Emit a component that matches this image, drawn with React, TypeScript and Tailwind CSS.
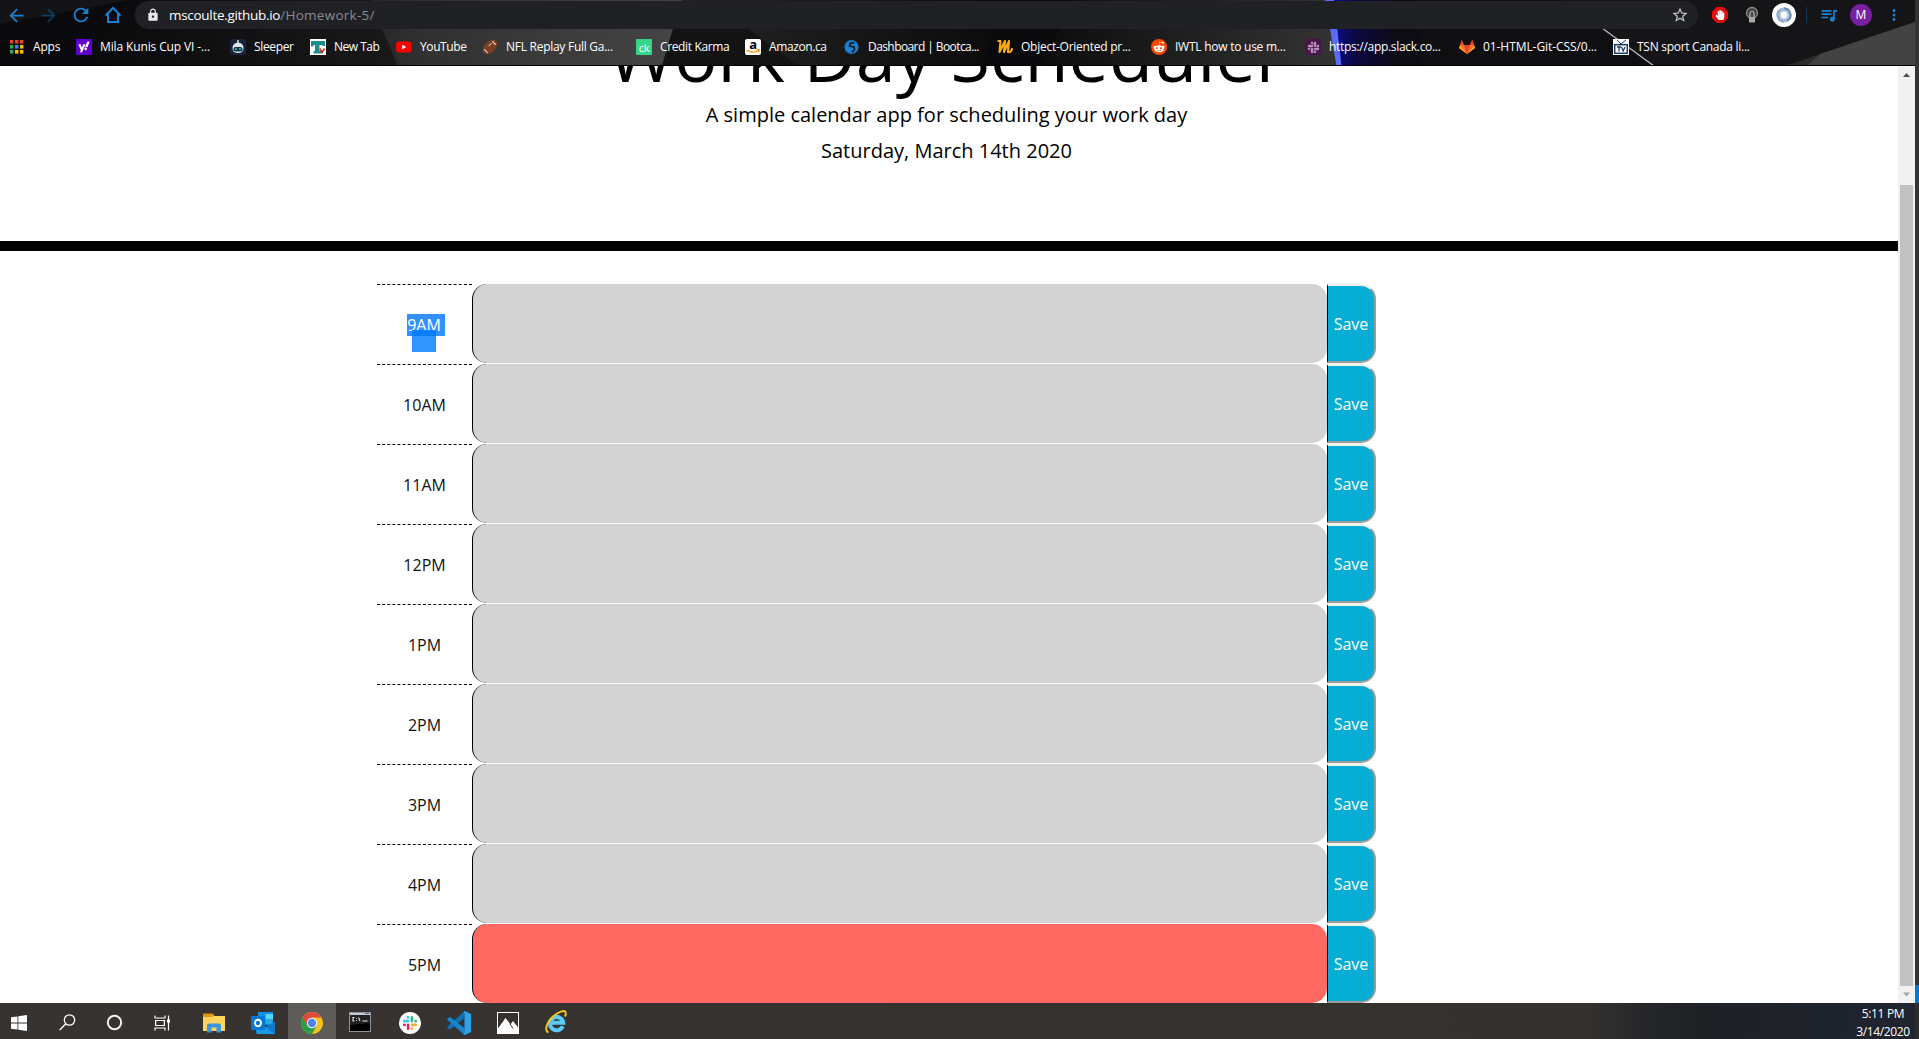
import type { ReactNode } from "react";
import { MdArrowBack, MdArrowForward, MdRefresh, MdLock, MdStarBorder, MdQueueMusic, MdMoreVert } from "react-icons/md";
import { FaYahoo, FaRedditAlien, FaSlack, FaHandPaper } from "react-icons/fa";

const hours = ["9AM", "10AM", "11AM", "12PM", "1PM", "2PM", "3PM", "4PM", "5PM"];
const currentHour = "5PM";

const AppsIcon = () => (
  <svg width="16" height="16" viewBox="0 0 16 16">
    {["#ea4335", "#ea4335", "#ea4335", "#34a853", "#4285f4", "#fbbc05", "#34a853", "#fbbc05", "#fbbc05"].map((c, i) => (
      <rect key={i} x={2 + (i % 3) * 5} y={1 + Math.floor(i / 3) * 5} width="3.4" height="3.6" fill={c} />
    ))}
  </svg>
);
const YahooIcon = () => (
  <span className="flex size-4 items-center justify-center bg-[#5f01d1] text-white"><FaYahoo size={12} /></span>
);
const SleeperIcon = () => (
  <svg width="16" height="16" viewBox="0 0 16 16">
    <rect width="16" height="16" rx="2" fill="#18233b" />
    <path d="M2.500 9a5.500 5.500 0 0 1 11 0q0 5-5.500 5T2.500 9" fill="#dce8ec" />
    <rect x="3.500" y="8" width="9" height="4.500" rx="2" fill="#173140" />
    <circle cx="6" cy="10" r="1" fill="#38c9bd" />
    <circle cx="10" cy="10" r="1" fill="#38c9bd" />
    <path d="M8 1v3" stroke="#dce8ec" strokeWidth="1.500" />
  </svg>
);
const NewTabIcon = () => (
  <svg width="16" height="16" viewBox="0 0 16 16">
    <rect width="16" height="16" fill="#fff" />
    <path d="M1 2h14v5h-2.500V6H9.500v6H11v2.500H3.500V12H5V6H3.500v1.500H1z" fill="#1b8d8a" />
    <path d="M10 9.500l2 4L14.500 9.500" stroke="#d22" strokeWidth="1.600" fill="none" />
  </svg>
);
const YoutubeIcon = () => (
  <svg width="16" height="16" viewBox="0 0 16 16">
    <rect x="0" y="2.500" width="15.500" height="11" rx="3" fill="#f00" />
    <path d="M6.200 5.700v4.600L10.200 8z" fill="#fff" />
  </svg>
);
const FootballIcon = () => (
  <svg width="16" height="16" viewBox="0 0 16 16">
    <ellipse cx="8" cy="8" rx="8.500" ry="5.500" fill="#7c3f22" transform="rotate(-45 8 8)" />
    <path d="M2 10.500q2.200.8 3.500 3.500M10.500 2q1.200 2.700 3.500 3.500" stroke="#e8ddd6" strokeWidth="1.100" fill="none" />
    <path d="M6.500 7l3-2.500" stroke="#e8ddd6" strokeWidth="1" />
  </svg>
);
const KarmaIcon = () => (
  <span className="flex size-4 items-center justify-center rounded-[1px] bg-[#35d58b] text-[11px] leading-none tracking-tight text-white">ck</span>
);
const AmazonIcon = () => (
  <span className="relative flex size-4 items-center justify-center rounded-[2px] bg-white">
    <b className="-mt-[5px] text-[13px] leading-none text-black">a</b>
    <svg width="16" height="16" viewBox="0 0 16 16" className="absolute inset-0">
      <path d="M1.500 11q6.500 4 12 .5M11.500 10.500l2.800.3-.8 2.500" stroke="#f90" strokeWidth="1.400" fill="none" />
    </svg>
  </span>
);
const GlobeIcon = () => (
  <svg width="16" height="16" viewBox="0 0 16 16">
    <circle cx="7.500" cy="8" r="7" fill="#1a7fd0" />
    <path d="M10.500 3.500L6 4.500 5.500 7l4.500 1 .5 2.500L8 13.500" stroke="#12181d" strokeWidth="1.700" fill="none" />
  </svg>
);
const ScribbleIcon = () => (
  <svg width="16" height="16" viewBox="0 0 16 16">
    <path d="M.5 2h3L2.500 13 8 2 7 13l5-11-1 11q3 1 4.500-4" stroke="#fba919" strokeWidth="2.200" fill="none" strokeLinejoin="round" />
  </svg>
);
const RedditIcon = () => (
  <span className="flex size-4 items-center justify-center rounded-full bg-[#ff4500] text-white"><FaRedditAlien size={12} /></span>
);
const SlackFav = () => (
  <span className="flex size-4 items-center justify-center bg-[#4a154b] text-[#b58fb8]"><FaSlack size={13} /></span>
);
const FoxIcon = () => (
  <svg width="16" height="16" viewBox="0 0 16 16">
    <path d="M8 15L0 9l2.800-8L5 6h6l2.200-5L16 9z" fill="#fc6d26" />
    <path d="M8 15L5 6h6zM1 6l1.800-5L5 6zM11 6l2.200-5L15 6z" fill="#e24329" />
    <path d="M0 9l1-2.500L8 15zM16 9l-1-2.500L8 15z" fill="#fca326" />
  </svg>
);
const TvIcon = () => (
  <svg width="16" height="16" viewBox="0 0 16 16">
    <rect width="16" height="16" fill="#fff" />
    <path d="M4 1l4 4 5-4" stroke="#1d3c63" fill="none" />
    <rect x="1.700" y="5.700" width="12.600" height="8.600" fill="#fff" stroke="#1d3c63" strokeWidth="1.500" />
    <path d="M4 8h4M6 8v4.500M8.500 8l1.700 4L12 8" stroke="#1d3c63" strokeWidth="1.300" fill="none" />
  </svg>
);

const bookmarks: { label: string; icon: ReactNode; cls: string }[] = [
  { label: "Apps", icon: <AppsIcon />, cls: "w-[68px] gap-[9px] tracking-[-0.2px]" },
  { label: "Mila Kunis Cup VI -...", icon: <YahooIcon />, cls: "w-[154px] tracking-[-0.13px]" },
  { label: "Sleeper", icon: <SleeperIcon />, cls: "w-[80px] tracking-[-0.35px]" },
  { label: "New Tab", icon: <NewTabIcon />, cls: "w-[86px] tracking-[-0.5px]" },
  { label: "YouTube", icon: <YoutubeIcon />, cls: "w-[86px] tracking-[-0.4px]" },
  { label: "NFL Replay Full Ga...", icon: <FootballIcon />, cls: "w-[154px] tracking-[-0.27px]" },
  { label: "Credit Karma", icon: <KarmaIcon />, cls: "w-[109px] tracking-[-0.36px]" },
  { label: "Amazon.ca", icon: <AmazonIcon />, cls: "w-[99px] tracking-[-0.4px]" },
  { label: "Dashboard | Bootca...", icon: <GlobeIcon />, cls: "w-[153px] tracking-[-0.58px]" },
  { label: "Object-Oriented pr...", icon: <ScribbleIcon />, cls: "w-[154px] tracking-[-0.25px]" },
  { label: "IWTL how to use m...", icon: <RedditIcon />, cls: "w-[154px] tracking-[-0.25px]" },
  { label: "https://app.slack.co...", icon: <SlackFav />, cls: "w-[154px] tracking-[-0.3px]" },
  { label: "01-HTML-Git-CSS/0...", icon: <FoxIcon />, cls: "w-[154px] tracking-[-0.07px]" },
  { label: "TSN sport Canada li...", icon: <TvIcon />, cls: "w-[154px] tracking-[-0.28px]" },
];

const ThemeBackdrop = () => (
  <svg className="absolute inset-0" width="1915" height="66" viewBox="0 0 1915 66" preserveAspectRatio="none">
    <defs>
      <linearGradient id="facetA" x1="0" x2="1"><stop offset="0" stopColor="#262627" /><stop offset=".15" stopColor="#303030" /><stop offset="1" stopColor="#454545" /></linearGradient>
      <linearGradient id="facetB" x1="0" x2="1"><stop offset="0" stopColor="#0c0c0d" /><stop offset="1" stopColor="#343434" /></linearGradient>
      <linearGradient id="facetC" x1="0" x2="1"><stop offset="0" stopColor="#262626" /><stop offset="1" stopColor="#0b0b0c" /></linearGradient>
      <linearGradient id="facetD" x1="0" x2="1"><stop offset="0" stopColor="#0a0a90" /><stop offset=".25" stopColor="#0b0940" /><stop offset=".7" stopColor="#0d0b14" /></linearGradient>
      <linearGradient id="facetE" x1="0" x2="1"><stop offset="0" stopColor="#0a090b" /><stop offset="1" stopColor="#1a191a" /></linearGradient>
    </defs>
    <rect width="1915" height="66" fill="#0a090b" />
    <path d="M0 24L130 0H0z" fill="#141316" />
    <path d="M130 0h245l25 66H80z" fill="url(#facetE)" />
    <path d="M370 0h312l-20 66H398z" fill="url(#facetA)" />
    <path d="M682 0h320l-20 66H662z" fill="url(#facetC)" />
    <path d="M748 29l50 37H662l11-37z" fill="#131314" />
    <path d="M1074 0h256l10 66h-300z" fill="url(#facetB)" />
    <path d="M1333 0h90v66h-84z" fill="url(#facetD)" />
    <path d="M1325 0h9l7.500 66h-5z" fill="#5b6bf5" />
    <path d="M1420 0h170l64 66h-234z" fill="#0f0e11" />
    <path d="M1560 0h355v66h-261z" fill="#151417" />
    <path d="M1602 28l52 38" stroke="#b9b9bc" strokeWidth="1.300" />
    <path d="M1785 66L1915 22v44z" fill="#2c2c2d" />
    <path d="M1807 66L1820 54L1915 22v44z" fill="#434343" />
  </svg>
);

const HomeIcon = () => (
  <svg width="18" height="18" viewBox="0 0 18 18" fill="none" stroke="#1a80d3" strokeWidth="2">
    <path d="M1.500 9.500L9 2l7.500 7.500M4 8v8h10V8" />
  </svg>
);

const LampIcon = () => (
  <svg width="14" height="18" viewBox="0 0 14 18">
    <circle cx="7" cy="7" r="5.500" fill="#454545" stroke="#8b8b8b" strokeWidth="1.300" />
    <path d="M5 12V7.500a2 2 0 0 1 4 0V12" fill="none" stroke="#b5b5b5" strokeWidth="1.200" />
    <path d="M4 11h6v5.500H4z" fill="#a9a9a9" />
  </svg>
);

const SwirlIcon = () => (
  <svg width="24" height="24" viewBox="0 0 24 24" fill="none">
    <circle cx="12" cy="12" r="12" fill="#fff" />
    <circle cx="12" cy="12" r="5.500" stroke="#a9bfd8" strokeWidth="4.200" />
    <path d="M12 5.300a6.700 6.700 0 0 1 3 12.600" stroke="#6d8fb6" strokeWidth="2" />
    <path d="M12 18.700a6.700 6.700 0 0 1-3-12.600" stroke="#8aa6c6" strokeWidth="1.600" />
  </svg>
);

const StopHandIcon = () => (
  <span className="flex size-4 items-center justify-center bg-[#e40d0d] text-white [clip-path:polygon(30%_0,70%_0,100%_30%,100%_70%,70%_100%,30%_100%,0_70%,0_30%)]">
    <FaHandPaper size={10} />
  </span>
);

function BrowserChrome() {
  return (
    <header className="relative h-[66px] w-[1915px] shrink-0 overflow-hidden border-b border-black">
      <ThemeBackdrop />
      <div className="relative flex h-[29px] items-center pt-px text-[#1a80d3]">
        <div className="flex w-[135px] shrink-0 items-center pl-[6px]">
          <span className="flex w-8"><MdArrowBack size={21} /></span>
          <span className="flex w-8 text-[#0d3d61]"><MdArrowForward size={21} /></span>
          <span className="flex w-[34px]"><MdRefresh size={22} /></span>
          <HomeIcon />
        </div>
        <div className="flex h-7 w-[1563px] shrink-0 items-center rounded-full bg-[#202124] pr-[9px] pl-[11px]">
          <MdLock size={14} color="#e8e8e8" />
          <span className="ml-[9px] flex-1 text-[13.500px] text-[#888a8d]">
            <span className="tracking-[-0.3px] text-white">mscoulte.github.io</span>
            <span className="tracking-[0.27px]">/Homework-5/</span>
          </span>
          <MdStarBorder size={18} color="#c4c6c9" />
        </div>
        <div className="flex items-center">
          <span className="ml-[14px]"><StopHandIcon /></span>
          <span className="ml-[17px]"><LampIcon /></span>
          <span className="ml-[13px]"><SwirlIcon /></span>
          <span className="ml-[10px] h-4 w-px bg-[#123a5a]" />
          <span className="ml-[12px]"><MdQueueMusic size={20} /></span>
          <span className="ml-[11px] flex size-[22px] items-center justify-center rounded-full bg-[#7b1fa2] text-[12px] text-white">M</span>
          <span className="ml-[13px]"><MdMoreVert size={18} /></span>
        </div>
      </div>
      <nav className="relative flex h-9 items-center pl-2 text-[12px] text-white">
        {bookmarks.map((b) => (
          <div key={b.label} className={`flex shrink-0 items-center gap-2 whitespace-nowrap ${b.cls}`}>
            <span className="flex size-4 shrink-0">{b.icon}</span>
            <span className="leading-4">{b.label}</span>
          </div>
        ))}
      </nav>
    </header>
  );
}

function TimeBlock({ hour }: { hour: string }) {
  return (
    <div className="flex h-20">
      <div className="flex w-[95px] justify-center border-t border-dashed border-black pt-7 text-base leading-6">
        {hour === "9AM" ? (
          <span className="relative mt-px ml-[3px] h-[22px] bg-[#3390ff] pr-1 leading-[22px] text-white">
            {hour}
            <span className="absolute top-4 left-[5px] h-[22px] w-6 bg-[#0078ff]/80" />
          </span>
        ) : (
          <span className="text-[#111]">{hour}</span>
        )}
      </div>
      <div className={`h-[79px] w-[855px] rounded-[15px] border-l border-black ${hour === currentHour ? "bg-[#ff6961]" : "bg-[#d3d3d3]"}`} />
      <button className="flex h-[79px] w-[49px] items-center justify-center rounded-r-[15px] border-2 border-l border-t-[#efefef] border-r-[#9a9a9a] border-b-[#9a9a9a] border-l-black bg-[#06aed5] text-base text-white">
        Save
      </button>
    </div>
  );
}

const ColorSlack = () => (
  <svg width="22" height="22" viewBox="0 0 22 22">
    <circle cx="11" cy="11" r="11" fill="#fff" />
    <g strokeWidth="2.600" strokeLinecap="round">
      <path d="M5.200 9.100h3.900M9.100 5.200v.3" stroke="#36c5f0" />
      <path d="M12.900 5.200v3.900M16.800 9.100h-.3" stroke="#2eb67d" />
      <path d="M12.900 12.900h3.900M12.900 16.800v-.3" stroke="#ecb22e" />
      <path d="M9.100 12.900v3.900M5.200 12.900h.3" stroke="#e01e5a" />
    </g>
  </svg>
);

const tasks: { name: string; cls: string; icon: ReactNode }[] = [
  { name: "start", cls: "w-[43px] pr-[5px]", icon: (
    <svg width="16" height="16" viewBox="0 0 16 16" fill="#fff"><path d="M0 2.300L6.500 1.400V7.600H0zM7.300 1.300L16 0v7.600H7.300zM0 8.400h6.500v6.200L0 13.700zM7.300 8.400H16V16l-8.700-1.300z" /></svg>
  ) },
  { name: "search", cls: "w-12", icon: (
    <svg width="17" height="17" viewBox="0 0 17 17" fill="none" stroke="#fff" strokeWidth="1.300"><circle cx="10.500" cy="6" r="5.200" /><path d="M6.800 9.700L.7 16" /></svg>
  ) },
  { name: "cortana", cls: "w-12 pr-px", icon: (
    <svg width="17" height="17" viewBox="0 0 17 17" fill="none" stroke="#f4f4f4" strokeWidth="2"><circle cx="8.500" cy="8.500" r="6.700" /></svg>
  ) },
  { name: "task view", cls: "w-12 pr-px", icon: (
    <svg width="17" height="16" viewBox="0 0 17 16" fill="none" stroke="#fff" strokeWidth="1.200"><path d="M1 .5v2.500h10V.5M1 15.500V13h10v2.500M1.600 5.500h8.800v5H1.600zM14.500.500v15" /><path d="M13 4.500h3v3h-3z" fill="#fff" stroke="none" /></svg>
  ) },
  { name: "explorer", cls: "w-[53px]", icon: (
    <svg width="22" height="20" viewBox="0 0 22 20"><path d="M0 1h10l1.500 2H22v15H0z" fill="#ffd35c" /><path d="M0 1.500Q0 .5 1 .5h8.500l1.500 2L9 4H0z" fill="#dd9a08" /><path d="M4 19.500V12q0-1.500 1.500-1.500h11q1.500 0 1.500 1.500v7.500h-4.500v-5h-5v5z" fill="#3a96dd" /></svg>
  ) },
  { name: "outlook", cls: "w-12 pr-0.5", icon: (
    <svg width="24" height="22" viewBox="0 0 24 22"><path d="M7 0h15v13H7z" fill="#1490df" /><path d="M14.500 2H22v5h-7.500z" fill="#50d9ff" /><path d="M7 7h7.500v6H7z" fill="#0f6cbd" /><path d="M14.500 7H22v5h-7.500z" fill="#28a8ea" /><path d="M5 12l10 3 9-5v12H7q-2 0-2-2z" fill="#1a9be8" /><path d="M24 10v12L14 15z" fill="#1478c8" /><rect y="4" width="14" height="14" rx="1" fill="#0078d4" /><ellipse cx="7" cy="11" rx="3" ry="3.300" fill="none" stroke="#fff" strokeWidth="1.900" /></svg>
  ) },
  { name: "chrome", cls: "w-12 bg-[#5e5c59]", icon: (
    <svg width="22" height="22" viewBox="0 0 22 22"><circle cx="11" cy="11" r="11" fill="#fbc116" /><path d="M11 11L1.470 5.500A11 11 0 0 0 11 22l4.800-8.200z" fill="#2a9f48" /><path d="M1.470 5.500A11 11 0 0 1 20.530 5.500H11L6.200 13.700z" fill="#dd4b3e" /><circle cx="11" cy="11" r="5.200" fill="#fff" /><circle cx="11" cy="11" r="4.200" fill="#4a86ee" /></svg>
  ) },
  { name: "terminal", cls: "w-12 pb-px", icon: (
    <svg width="22" height="20" viewBox="0 0 22 20"><rect x=".5" y=".5" width="21" height="19" fill="#000" stroke="#8d9297" /><path d="M1 1h20v2H1z" fill="#c4ccd4" /><path d="M16 1.500h4" stroke="#4c6a9a" /><path d="M11 3h10v8L1 13V3z" fill="#222" /><path d="M5.500 5.500H4v3.500h1.500M7.500 6v.8M7.500 8v.8M9.500 5.500l1.500 3.500M13.500 9h5" stroke="#e8e8e8" fill="none" strokeWidth="1.100" /></svg>
  ) },
  { name: "slack", cls: "w-[52px]", icon: <ColorSlack /> },
  { name: "code", cls: "w-[46px]", icon: (
    <svg width="24" height="24" viewBox="0 0 24 24"><path d="M17.500 0v7L3 18.500.8 17.300q-1-1 0-2z" fill="#0f71b8" /><path d="M17.500 24v-7L3 6 .8 7.200q-1 1 0 2z" fill="#1587cf" /><path d="M17.500 0L24 3v18l-6.500 3-1.500-1.500q1.500.500 1.500-1V2.500q0-1.500-1.500-1z" fill="#2ba3ec" /></svg>
  ) },
  { name: "photos", cls: "w-[52px]", icon: (
    <svg width="22" height="22" viewBox="0 0 22 22"><rect x=".5" y=".5" width="21" height="21" fill="#34312e" stroke="#fff" /><path d="M1 16.500L8.500 6l5 6.500L16 9l5.500 7v5.500H1z" fill="#fff" /><path d="M13 12l3 4.500" stroke="#34312e" /></svg>
  ) },
  { name: "ie", cls: "w-[46px] pr-[3px] pb-px", icon: (
    <svg width="22" height="24" viewBox="0 0 22 24"><path d="M17.800 16.300A6.700 6.700 0 1 1 18.300 12.800H6.500" fill="none" stroke="#5ccaf7" strokeWidth="4" /><path d="M3.500 22.500C-2 20.500 3 9 12 3.500q7-4 8.500-1.500.8 2-.6 4.500" fill="none" stroke="#f8c323" strokeWidth="2" /></svg>
  ) },
];

function Taskbar() {
  return (
    <footer className="flex h-9 w-full shrink-0 justify-between bg-[linear-gradient(90deg,#363330_0,#34312e_1590px,#26272a_1640px,#1e2125_1700px,#1f2430_1900px)]">
      <div className="flex">
        {tasks.map((t) => (
          <div key={t.name} className={`flex items-center justify-center pt-[3px] ${t.cls}`}>{t.icon}</div>
        ))}
      </div>
      <div className="flex">
        <div className="flex w-[64px] flex-col items-center pt-[2px] text-[12px] leading-[18px] tracking-[-0.35px] text-white">
          <span>5:11 PM</span>
          <span className="whitespace-nowrap">3/14/2020</span>
        </div>
        <div className="w-1 bg-[#302e2b]" />
      </div>
    </footer>
  );
}

export default function App() {
  return (
    <div className="flex h-[1039px] w-[1919px] flex-col overflow-hidden bg-white font-['Open_Sans',sans-serif]">
      <div className="flex h-[1003px] shrink-0">
        <div className="flex w-[1915px] flex-col">
          <BrowserChrome />
          <div className="flex min-h-0 flex-1">
            <main className="w-[1898px] overflow-hidden text-black">
              <div className="flex h-[185px] flex-col items-center justify-end border-b-[10px] border-black pr-[5px] pb-[75px] text-center">
                <h1 className="mb-[3px] text-[72px] leading-[86px]">Work Day Scheduler</h1>
                <p className="mb-[6px] text-xl leading-[30px]">A simple calendar app for scheduling your work day</p>
                <p className="text-xl leading-[30px]">Saturday, March 14th 2020</p>
              </div>
              <div className="mt-[33px] pl-[377px]">
                {hours.map((h) => <TimeBlock key={h} hour={h} />)}
              </div>
            </main>
            <div className="flex w-[17px] flex-col items-center justify-between bg-[#f1f1f1]">
              <svg width="17" height="17" viewBox="0 0 17 17" className="shrink-0"><path d="M5 11l3.500-4 3.500 4z" fill="#505050" /></svg>
              <div className="mt-[102px] w-[13px] flex-1 bg-[#c1c1c1]" />
              <svg width="17" height="17" viewBox="0 0 17 17" className="shrink-0"><path d="M5 6.500l3.500 4 3.500-4z" fill="#a3a3a3" /></svg>
            </div>
          </div>
        </div>
        <div className="flex w-1 flex-col justify-end bg-[#333]"><div className="h-[18px] bg-[#0078d7]" /></div>
      </div>
      <Taskbar />
    </div>
  );
}
